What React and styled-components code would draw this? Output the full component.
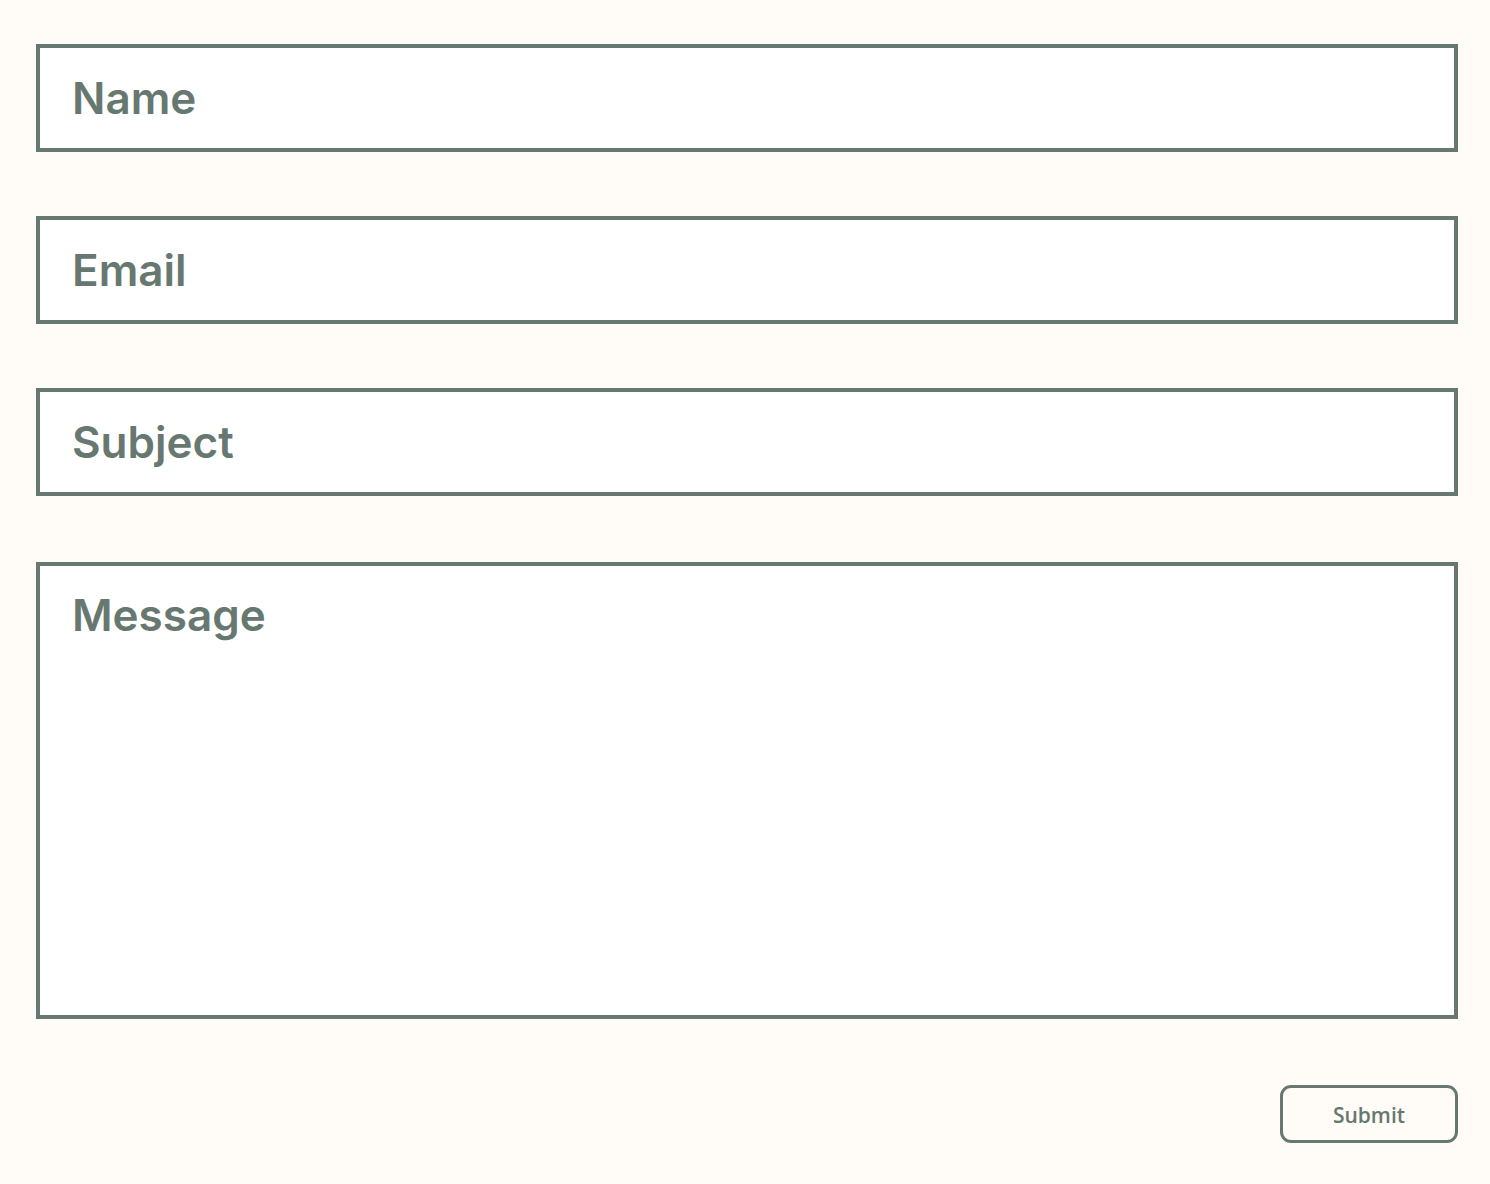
import React from 'react';
import styled, { createGlobalStyle } from 'styled-components';

const ink = '#667870';

const GlobalStyle = createGlobalStyle`
  html, body {
    margin: 0;
    background: #fffbf6;
  }
  * {
    box-sizing: border-box;
  }
`;

const Form = styled.form`
  display: flex;
  flex-direction: column;
  gap: 64px;
  padding: 44px 32px 40px 36px;
`;

const Field = styled.input`
  display: block;
  width: 100%;
  height: 108px;
  padding: 0 32px;
  border: 4px solid ${ink};
  border-radius: 0;
  background: #ffffff;
  color: ${ink};
  font-family: 'Inter', 'Open Sans', sans-serif;
  font-size: 44px;
  font-weight: 600;
  outline: none;

  &::placeholder {
    color: ${ink};
    opacity: 1;
  }
`;

const MessageArea = styled.textarea`
  display: block;
  width: 100%;
  height: 457px;
  margin-top: 2px;
  padding: 22px 32px;
  border: 4px solid ${ink};
  border-radius: 0;
  background: #ffffff;
  color: ${ink};
  font-family: 'Inter', 'Open Sans', sans-serif;
  font-size: 44px;
  font-weight: 600;
  resize: none;
  outline: none;

  &::placeholder {
    color: ${ink};
    opacity: 1;
  }
`;

const Actions = styled.div`
  display: flex;
  justify-content: flex-end;
  margin-top: 2px;
`;

const SubmitButton = styled.button`
  width: 178px;
  height: 58px;
  border: 3px solid ${ink};
  border-radius: 11px;
  background: transparent;
  color: ${ink};
  font-family: 'Open Sans', sans-serif;
  font-size: 21px;
  font-weight: 600;
  padding: 2px 0 0;
  cursor: pointer;
`;

export default function App() {
  return (
    <>
      <GlobalStyle />
      <Form onSubmit={(e) => e.preventDefault()}>
        <Field type="text" placeholder="Name" />
        <Field type="email" placeholder="Email" />
        <Field type="text" placeholder="Subject" />
        <MessageArea placeholder="Message" />
        <Actions>
          <SubmitButton type="submit">Submit</SubmitButton>
        </Actions>
      </Form>
    </>
  );
}
